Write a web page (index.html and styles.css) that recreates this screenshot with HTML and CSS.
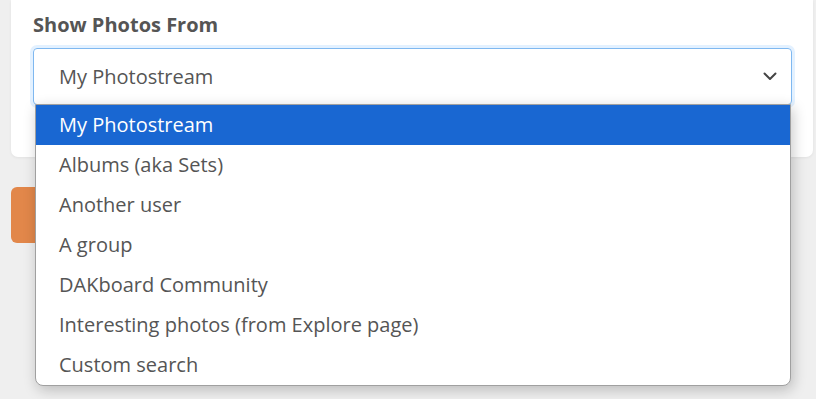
FILE: index.html
```html
<!DOCTYPE html>
<html lang="en">
<head>
    <meta charset="UTF-8">
    <meta name="viewport" content="width=device-width, initial-scale=1.0">
    <title>Show Photos From</title>
    <link rel="stylesheet" href="styles.css">
</head>
<body>

    <div class="card">
        <label class="field-label" for="source">Show Photos From</label>
        <div class="select-wrap">
            <div class="select" id="source">
                <span>My Photostream</span>
                <svg class="chevron" width="14" height="9" viewBox="0 0 14 9">
                    <path d="M1.5 1.5 L7 7 L12.5 1.5" fill="none" stroke="#444" stroke-width="2" stroke-linecap="round" stroke-linejoin="round"/>
                </svg>
            </div>

            <ul class="options">
                <li class="active">My Photostream</li>
                <li>Albums (aka Sets)</li>
                <li>Another user</li>
                <li>A group</li>
                <li>DAKboard Community</li>
                <li>Interesting photos (from Explore page)</li>
                <li>Custom search</li>
            </ul>
        </div>
    </div>

    <div class="actions">
        <button class="btn-save" aria-label="Save"></button>
    </div>

</body>
</html>
```

FILE: styles.css
```css
body {
    margin: 0;
    min-height: 100vh;
    background-color: #efefef;
    font-family: "Open Sans", "Noto Sans", sans-serif;
    color: #555;
}

.card {
    margin: 0 3px 0 11px;
    padding: 12px 21px 52px 22px;
    background-color: white;
    border-radius: 0 0 7px 7px;
    box-shadow: 0 1px 3px rgba(0, 0, 0, 0.06);
}

.field-label {
    display: block;
    font-size: 20px;
    font-weight: 700;
    line-height: 26px;
    color: #555;
    margin-bottom: 10px;
}

.select-wrap {
    position: relative;
}

.select {
    height: 55px;
    border: 1px solid #7fb8f0;
    border-radius: 4px;
    box-shadow: 0 0 0 3px rgba(128, 189, 255, 0.22);
    display: flex;
    align-items: center;
    justify-content: space-between;
    padding: 0 14px 0 25px;
    font-size: 20px;
    color: #555;
}

.chevron {
    display: block;
}

.options {
    position: absolute;
    left: 2px;
    right: 1px;
    top: 56px;
    margin: 0;
    padding: 0;
    list-style: none;
    background-color: white;
    border: 1px solid #a0a0a0;
    border-radius: 0 0 8px 8px;
    box-shadow: 2px 4px 14px rgba(0, 0, 0, 0.22);
    z-index: 2;
    overflow: hidden;
}

.options li {
    height: 40px;
    line-height: 40px;
    padding-left: 23px;
    font-size: 20px;
    color: #555;
}

.options li.active {
    background-color: #1967d2;
    color: white;
}

.actions {
    padding: 30px 11px;
}

.btn-save {
    display: block;
    width: 120px;
    height: 56px;
    border: none;
    border-radius: 6px;
    background-color: #e2874a;
}
```
